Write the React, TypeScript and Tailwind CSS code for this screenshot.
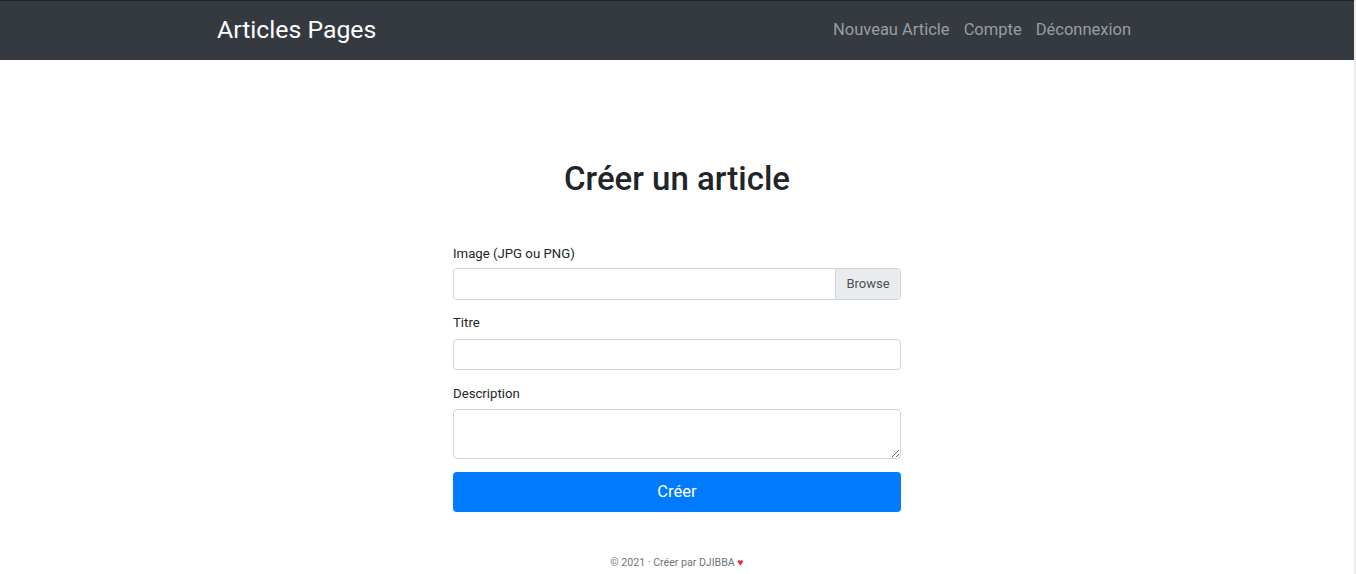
import React from 'react';

const font = { fontFamily: 'Roboto, "Liberation Sans", sans-serif' };

const Field: React.FC<{ label: string; children: React.ReactNode; className?: string }> = ({ label, children, className }) => (
  <div className={className}>
    <label className="block text-[13.2px] leading-[20px] text-[#212529]">{label}</label>
    {children}
  </div>
);

const App: React.FC = () => {
  return (
    <div className="flex min-h-[574px] bg-white" style={font}>
      <div className="flex-1 flex flex-col">
        <nav className="h-[60px] bg-[#343a40] border-t border-[#222]">
          <div className="w-[922px] mx-auto flex items-center justify-between h-full">
            <a className="text-[24.8px] leading-none text-white -mt-[1px] ml-[1px]">Articles Pages</a>
            <ul className="flex gap-[14px] text-[16.5px] text-[#9a9da0] pr-[7px]">
              <li>Nouveau Article</li>
              <li>Compte</li>
              <li>Déconnexion</li>
            </ul>
          </div>
        </nav>

        <main className="flex flex-col items-center">
          <h1 className="mt-[99px] text-[33px] leading-[40px] font-medium text-[#212529]">Créer un article</h1>

          <form className="w-[448px] mt-[44px] flex flex-col">
            <Field label="Image (JPG ou PNG)" className="pt-[1px]">
              <div className="mt-[4px] flex h-[32px] border border-[#ced4da] rounded-[4px] overflow-hidden">
                <div className="flex-1 bg-white" />
                <div className="w-[65px] flex items-center justify-center bg-[#e9ecef] border-l border-[#ced4da] text-[13px] text-[#495057]">
                  Browse
                </div>
              </div>
            </Field>

            <Field label="Titre" className="mt-[13px]">
              <input className="mt-[6px] w-full h-[31px] border border-[#ced4da] rounded-[4px] outline-none" />
            </Field>

            <Field label="Description" className="mt-[14px]">
              <textarea className="mt-[5px] w-full h-[50px] block border border-[#ced4da] rounded-[4px] outline-none" />
            </Field>

            <button
              type="button"
              className="mt-[13px] h-[40px] w-full rounded-[4px] bg-[#007bff] text-white text-[16.5px]"
            >
              Créer
            </button>
          </form>

          <footer className="mt-[44px] text-[10.6px] leading-[14px] text-[#6c757d]">
            © 2021 · Créer par DJIBBA <span className="text-[#dc3545]">♥</span>
          </footer>
        </main>
      </div>
      <div className="w-[2px] bg-[#ececec]" />
    </div>
  );
};

export default App;
